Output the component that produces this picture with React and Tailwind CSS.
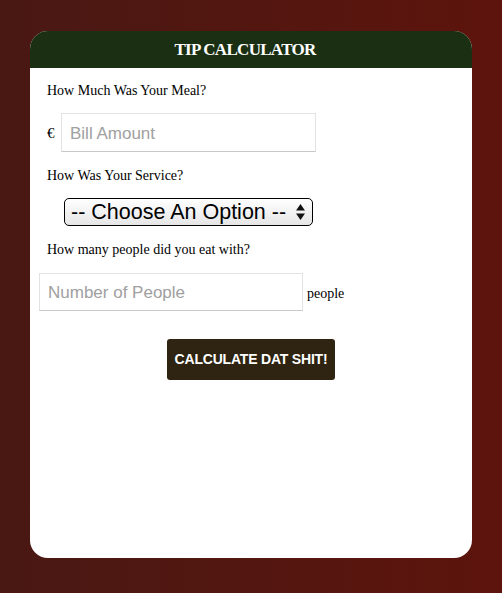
export default function App() {
  return (
    <div className="min-h-[593px] w-full bg-gradient-to-r from-[#491813] to-[#5d140c] pt-[31px] pb-[36px] font-['Liberation_Serif',serif]">
      <div className="mx-auto w-[442px] h-[527px] bg-white rounded-[18px] overflow-hidden flex flex-col">
        <div className="h-[37px] bg-[#1b2f12] flex items-center justify-center pr-[12px]">
          <h1 className="text-white text-[17px] leading-none font-bold tracking-[-0.7px]">TIP CALCULATOR</h1>
        </div>

        <div className="flex flex-col pl-[17px] text-[14px] leading-[16px] text-black">
          <p className="mt-[15px]">How Much Was Your Meal?</p>

          <div className="mt-[14px] flex items-center">
            <span className="w-[14px] text-[15px]">€</span>
            <input
              type="text"
              placeholder="Bill Amount"
              className="w-[255px] h-[39px] border border-[#e2e2e2] border-b-[#c8c8c8] px-[8px] pt-[2px] font-['Liberation_Sans',sans-serif] text-[17px] placeholder:text-[#a0a0a0] outline-none"
            />
          </div>

          <p className="mt-[16px]">How Was Your Service?</p>

          <div className="mt-[14px] ml-[17px] relative w-[249px] h-[28px]">
            <select className="appearance-none w-full h-full rounded-[5px] border border-black bg-gradient-to-b from-white to-[#e6e6e6] pl-[6px] pt-[2px] font-['Liberation_Sans',sans-serif] text-[21.5px] leading-none text-black outline-none">
              <option>-- Choose An Option --</option>
            </select>
            <svg className="absolute right-[8px] top-[6px] pointer-events-none" width="9" height="16" viewBox="0 0 9 16">
              <path d="M4.5 0 L9 6.5 L0 6.5 Z" fill="#111" />
              <path d="M4.5 16 L9 9.5 L0 9.5 Z" fill="#111" />
            </svg>
          </div>

          <p className="mt-[16px]">How many people did you eat with?</p>

          <div className="mt-[15px] -ml-[8px] flex items-center">
            <input
              type="text"
              placeholder="Number of People"
              className="w-[264px] h-[38px] border border-[#e2e2e2] border-b-[#c8c8c8] px-[8px] pt-[2px] font-['Liberation_Sans',sans-serif] text-[17px] placeholder:text-[#a0a0a0] outline-none"
            />
            <span className="ml-[4px] mt-[4px]">people</span>
          </div>
        </div>

        <div className="mt-[28px] flex justify-center">
          <button className="w-[168px] h-[41px] rounded-[3px] bg-[#2e2411] text-white font-['Liberation_Sans',sans-serif] font-bold text-[14px] tracking-[-0.2px]">
            CALCULATE DAT SHIT!
          </button>
        </div>
      </div>
    </div>
  );
}
